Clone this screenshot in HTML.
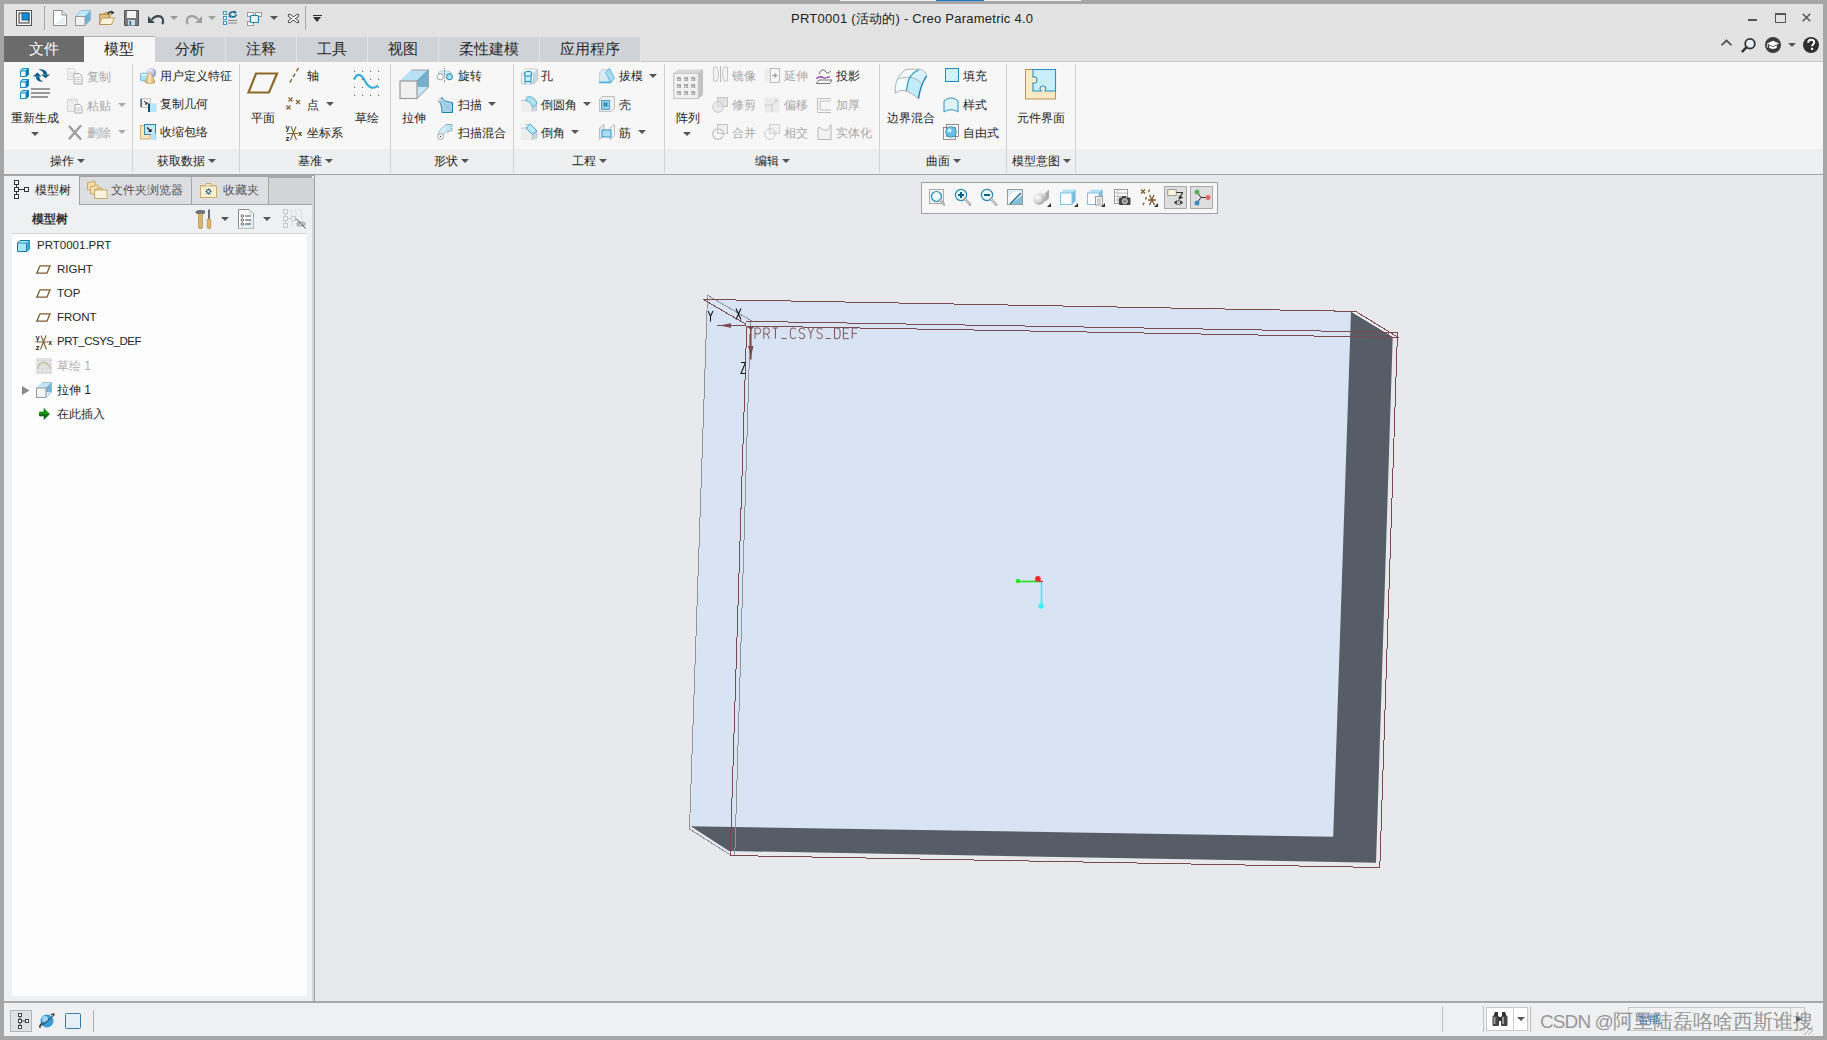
<!DOCTYPE html>
<html><head><meta charset="utf-8">
<style>
*{margin:0;padding:0;box-sizing:border-box}
html,body{width:1827px;height:1040px;overflow:hidden;background:#a6a6a6;font-family:"Liberation Sans",sans-serif;color:#333}
.a{position:absolute}
.t{position:absolute;white-space:nowrap;line-height:1}
svg{position:absolute;overflow:visible}
.arr{position:absolute;width:0;height:0;border-left:4px solid transparent;border-right:4px solid transparent}
</style></head><body>

<div class="a" style="left:840px;top:0px;width:241px;height:1px;background:#efefef;"></div>
<div class="a" style="left:936px;top:0px;width:48px;height:1px;background:#1f78d1;"></div>
<div class="a" style="left:4px;top:4px;width:1819px;height:32px;background:#e3e3e3;"></div>
<div class="t" style="left:791px;top:11.9px;font-size:13px;color:#222;font-weight:400;letter-spacing:0.24px">PRT0001 (活动的) - Creo Parametric 4.0</div>
<div class="a" style="left:1748px;top:19px;width:9px;height:2px;background:#555;"></div>
<svg style="left:1775px;top:13px" width="11" height="10" viewBox="0 0 11 10"><rect x="0.5" y="0.5" width="10" height="9" fill="none" stroke="#555"/><rect x="0" y="0" width="11" height="2" fill="#555"/></svg>
<svg style="left:1802px;top:13px" width="9" height="9" viewBox="0 0 9 9"><path d="M0.7 0.7L8.3 8.3M8.3 0.7L0.7 8.3" stroke="#555" stroke-width="1.5"/></svg>
<div class="a" style="left:4px;top:36px;width:1819px;height:26px;background:#e3e3e3;"></div>
<div class="a" style="left:4px;top:36px;width:80px;height:26px;background:#6b6b6b;"></div>
<div class="t" style="left:29px;top:40.5px;font-size:15px;color:#fff;font-weight:400;">文件</div>
<div class="a" style="left:84px;top:36px;width:71px;height:26px;background:#f7f7f7;border-top:1px solid #b0b0b0"></div>
<div class="t" style="left:104px;top:40.5px;font-size:15px;color:#222;font-weight:400;">模型</div>
<div class="a" style="left:155px;top:37px;width:70px;height:25px;background:#cfd2d6;"></div>
<div class="t" style="left:175px;top:40.5px;font-size:15px;color:#2a2a2a;font-weight:400;">分析</div>
<div class="a" style="left:226px;top:37px;width:70px;height:25px;background:#cfd2d6;"></div>
<div class="t" style="left:246px;top:40.5px;font-size:15px;color:#2a2a2a;font-weight:400;">注释</div>
<div class="a" style="left:297px;top:37px;width:70px;height:25px;background:#cfd2d6;"></div>
<div class="t" style="left:317px;top:40.5px;font-size:15px;color:#2a2a2a;font-weight:400;">工具</div>
<div class="a" style="left:368px;top:37px;width:70px;height:25px;background:#cfd2d6;"></div>
<div class="t" style="left:388px;top:40.5px;font-size:15px;color:#2a2a2a;font-weight:400;">视图</div>
<div class="a" style="left:439px;top:37px;width:100px;height:25px;background:#cfd2d6;"></div>
<div class="t" style="left:459px;top:40.5px;font-size:15px;color:#2a2a2a;font-weight:400;">柔性建模</div>
<div class="a" style="left:540px;top:37px;width:100px;height:25px;background:#cfd2d6;"></div>
<div class="t" style="left:560px;top:40.5px;font-size:15px;color:#2a2a2a;font-weight:400;">应用程序</div>
<div class="a" style="left:4px;top:62px;width:1819px;height:87px;background:#f7f7f7;"></div>
<div class="a" style="left:641px;top:61px;width:1182px;height:1px;background:#c5c8cc;"></div>
<div class="a" style="left:4px;top:149px;width:1819px;height:25px;background:#eeeff1;"></div>
<div class="a" style="left:4px;top:174px;width:1819px;height:1px;background:#b4b4b4;"></div>
<div class="a" style="left:132px;top:64px;width:1px;height:109px;background:#d2d2d2;"></div>
<div class="a" style="left:239px;top:64px;width:1px;height:109px;background:#d2d2d2;"></div>
<div class="a" style="left:390px;top:64px;width:1px;height:109px;background:#d2d2d2;"></div>
<div class="a" style="left:513px;top:64px;width:1px;height:109px;background:#d2d2d2;"></div>
<div class="a" style="left:664px;top:64px;width:1px;height:109px;background:#d2d2d2;"></div>
<div class="a" style="left:879px;top:64px;width:1px;height:109px;background:#d2d2d2;"></div>
<div class="a" style="left:1006px;top:64px;width:1px;height:109px;background:#d2d2d2;"></div>
<div class="a" style="left:1075px;top:64px;width:1px;height:109px;background:#d2d2d2;"></div>
<div class="t" style="left:50px;top:155.4px;font-size:12px;color:#262626;font-weight:400;">操作</div>
<div class="arr" style="left:76.5px;top:159.0px;border-left-width:4.0px;border-right-width:4.0px;border-top:4px solid #555"></div>
<div class="t" style="left:157px;top:155.4px;font-size:12px;color:#262626;font-weight:400;">获取数据</div>
<div class="arr" style="left:207.5px;top:159.0px;border-left-width:4.0px;border-right-width:4.0px;border-top:4px solid #555"></div>
<div class="t" style="left:298px;top:155.4px;font-size:12px;color:#262626;font-weight:400;">基准</div>
<div class="arr" style="left:324.5px;top:159.0px;border-left-width:4.0px;border-right-width:4.0px;border-top:4px solid #555"></div>
<div class="t" style="left:434px;top:155.4px;font-size:12px;color:#262626;font-weight:400;">形状</div>
<div class="arr" style="left:460.5px;top:159.0px;border-left-width:4.0px;border-right-width:4.0px;border-top:4px solid #555"></div>
<div class="t" style="left:572px;top:155.4px;font-size:12px;color:#262626;font-weight:400;">工程</div>
<div class="arr" style="left:598.5px;top:159.0px;border-left-width:4.0px;border-right-width:4.0px;border-top:4px solid #555"></div>
<div class="t" style="left:755px;top:155.4px;font-size:12px;color:#262626;font-weight:400;">编辑</div>
<div class="arr" style="left:781.5px;top:159.0px;border-left-width:4.0px;border-right-width:4.0px;border-top:4px solid #555"></div>
<div class="t" style="left:926px;top:155.4px;font-size:12px;color:#262626;font-weight:400;">曲面</div>
<div class="arr" style="left:952.5px;top:159.0px;border-left-width:4.0px;border-right-width:4.0px;border-top:4px solid #555"></div>
<div class="t" style="left:1012px;top:155.4px;font-size:12px;color:#262626;font-weight:400;">模型意图</div>
<div class="arr" style="left:1062.5px;top:159.0px;border-left-width:4.0px;border-right-width:4.0px;border-top:4px solid #555"></div>
<div class="t" style="left:11px;top:111.9px;font-size:12px;color:#262626;font-weight:400;">重新生成</div>
<div class="arr" style="left:30.5px;top:132.0px;border-left-width:4.0px;border-right-width:4.0px;border-top:4px solid #555"></div>
<div class="t" style="left:87px;top:70.9px;font-size:12px;color:#a9a9a9;font-weight:400;">复制</div>
<div class="t" style="left:87px;top:99.9px;font-size:12px;color:#a9a9a9;font-weight:400;">粘贴</div>
<div class="arr" style="left:117.5px;top:103.0px;border-left-width:4.0px;border-right-width:4.0px;border-top:4px solid #a9a9a9"></div>
<div class="t" style="left:87px;top:126.9px;font-size:12px;color:#a9a9a9;font-weight:400;">删除</div>
<div class="arr" style="left:117.5px;top:130.0px;border-left-width:4.0px;border-right-width:4.0px;border-top:4px solid #a9a9a9"></div>
<div class="t" style="left:160px;top:70.4px;font-size:12px;color:#262626;font-weight:400;">用户定义特征</div>
<div class="t" style="left:160px;top:98.4px;font-size:12px;color:#262626;font-weight:400;">复制几何</div>
<div class="t" style="left:160px;top:126.4px;font-size:12px;color:#262626;font-weight:400;">收缩包络</div>
<div class="t" style="left:251px;top:111.9px;font-size:12px;color:#262626;font-weight:400;">平面</div>
<div class="t" style="left:307px;top:70.4px;font-size:12px;color:#262626;font-weight:400;">轴</div>
<div class="t" style="left:307px;top:98.9px;font-size:12px;color:#262626;font-weight:400;">点</div>
<div class="arr" style="left:325.5px;top:102.0px;border-left-width:4.0px;border-right-width:4.0px;border-top:4px solid #555"></div>
<div class="t" style="left:307px;top:126.9px;font-size:12px;color:#262626;font-weight:400;">坐标系</div>
<div class="t" style="left:355px;top:111.9px;font-size:12px;color:#262626;font-weight:400;">草绘</div>
<div class="t" style="left:402px;top:111.9px;font-size:12px;color:#262626;font-weight:400;">拉伸</div>
<div class="t" style="left:458px;top:70.4px;font-size:12px;color:#262626;font-weight:400;">旋转</div>
<div class="t" style="left:458px;top:98.9px;font-size:12px;color:#262626;font-weight:400;">扫描</div>
<div class="arr" style="left:488.0px;top:102.0px;border-left-width:4.0px;border-right-width:4.0px;border-top:4px solid #555"></div>
<div class="t" style="left:458px;top:126.9px;font-size:12px;color:#262626;font-weight:400;">扫描混合</div>
<div class="t" style="left:541px;top:70.4px;font-size:12px;color:#262626;font-weight:400;">孔</div>
<div class="t" style="left:541px;top:98.9px;font-size:12px;color:#262626;font-weight:400;">倒圆角</div>
<div class="arr" style="left:583.0px;top:102.0px;border-left-width:4.0px;border-right-width:4.0px;border-top:4px solid #555"></div>
<div class="t" style="left:541px;top:126.9px;font-size:12px;color:#262626;font-weight:400;">倒角</div>
<div class="arr" style="left:571.0px;top:130.0px;border-left-width:4.0px;border-right-width:4.0px;border-top:4px solid #555"></div>
<div class="t" style="left:619px;top:70.4px;font-size:12px;color:#262626;font-weight:400;">拔模</div>
<div class="arr" style="left:649.0px;top:74.0px;border-left-width:4.0px;border-right-width:4.0px;border-top:4px solid #555"></div>
<div class="t" style="left:619px;top:98.9px;font-size:12px;color:#262626;font-weight:400;">壳</div>
<div class="t" style="left:619px;top:126.9px;font-size:12px;color:#262626;font-weight:400;">筋</div>
<div class="arr" style="left:637.5px;top:130.0px;border-left-width:4.0px;border-right-width:4.0px;border-top:4px solid #555"></div>
<div class="t" style="left:676px;top:111.9px;font-size:12px;color:#262626;font-weight:400;">阵列</div>
<div class="arr" style="left:683.0px;top:132.0px;border-left-width:4.0px;border-right-width:4.0px;border-top:4px solid #555"></div>
<div class="t" style="left:732px;top:70.4px;font-size:12px;color:#a9a9a9;font-weight:400;">镜像</div>
<div class="t" style="left:732px;top:98.9px;font-size:12px;color:#a9a9a9;font-weight:400;">修剪</div>
<div class="t" style="left:732px;top:126.9px;font-size:12px;color:#a9a9a9;font-weight:400;">合并</div>
<div class="t" style="left:784px;top:70.4px;font-size:12px;color:#a9a9a9;font-weight:400;">延伸</div>
<div class="t" style="left:784px;top:98.9px;font-size:12px;color:#a9a9a9;font-weight:400;">偏移</div>
<div class="t" style="left:784px;top:126.9px;font-size:12px;color:#a9a9a9;font-weight:400;">相交</div>
<div class="t" style="left:836px;top:70.4px;font-size:12px;color:#262626;font-weight:400;">投影</div>
<div class="t" style="left:836px;top:98.9px;font-size:12px;color:#a9a9a9;font-weight:400;">加厚</div>
<div class="t" style="left:836px;top:126.9px;font-size:12px;color:#a9a9a9;font-weight:400;">实体化</div>
<div class="t" style="left:887px;top:111.9px;font-size:12px;color:#262626;font-weight:400;">边界混合</div>
<div class="t" style="left:963px;top:70.4px;font-size:12px;color:#262626;font-weight:400;">填充</div>
<div class="t" style="left:963px;top:98.9px;font-size:12px;color:#262626;font-weight:400;">样式</div>
<div class="t" style="left:963px;top:126.9px;font-size:12px;color:#262626;font-weight:400;">自由式</div>
<div class="t" style="left:1017px;top:111.9px;font-size:12px;color:#262626;font-weight:400;">元件界面</div>
<svg style="left:16px;top:10px" width="16" height="16" viewBox="0 0 16 16"><rect x="0.5" y="0.5" width="15" height="15" fill="#fff" stroke="#555"/><rect x="3" y="3" width="10" height="10" fill="#eee" stroke="#333" stroke-width="1"/><rect x="6" y="3" width="7" height="7" fill="#0a8fd8" stroke="#1a4f8a" stroke-width="0.8"/></svg>
<div class="a" style="left:44px;top:6px;width:1px;height:24px;background:#a8a8a8;"></div>
<svg style="left:53px;top:10px" width="14" height="16" viewBox="0 0 14 16"><path d="M0.5 0.5H9L13.5 5V15.5H0.5Z" fill="#fff" stroke="#8a8a8a"/><path d="M9 0.5V5H13.5" fill="#dfe8ee" stroke="#8a8a8a"/><path d="M2 14L12 6V14Z" fill="#e6eef3"/></svg>
<svg style="left:75px;top:10px" width="16" height="16" viewBox="0 0 16 16"><path d="M0.5 6.5L6 0.5H15.5V10L10 15.5Z" fill="#8cc7e3"/><path d="M0.5 6.5L6 0.5H15.5L10 6.5Z" fill="#c4e7f6"/><path d="M10 6.5L15.5 0.5V10L10 15.5Z" fill="#6fb1d3"/><rect x="0.5" y="6.5" width="9.5" height="9" fill="#f2f2f2" stroke="#999"/><path d="M0.5 6.5L6 0.5H15.5V10L10 15.5M10 6.5L15.5 0.5" fill="none" stroke="#8fbcd4" stroke-width="0.8"/></svg>
<svg style="left:99px;top:10px" width="16" height="15" viewBox="0 0 16 15"><path d="M0.5 4H5L6.5 2.5H11V7H0.5Z" fill="#d6b26c" stroke="#b08a45" stroke-width="0.8"/><path d="M0.5 14.5V4.5H10V14.5Z" fill="#e2c283" stroke="#b08a45" stroke-width="0.8"/><path d="M0.5 14.5L3 8H15.5L12.5 14.5Z" fill="#fdf3dc" stroke="#b08a45" stroke-width="0.8"/><path d="M9 4C10 1.5 12 1 14 2.5" fill="none" stroke="#333" stroke-width="1.4"/><path d="M12.5 0.5L15.5 3L12 4.5Z" fill="#333"/></svg>
<svg style="left:124px;top:10px" width="15" height="16" viewBox="0 0 15 16"><path d="M0.5 0.5H14.5V15.5H0.5Z" fill="#7a7a7a" stroke="#555"/><rect x="3" y="1" width="9" height="7" fill="#f4f4f4"/><rect x="4" y="10" width="7" height="5.5" fill="#bfe0f0"/><rect x="5.5" y="11" width="1.5" height="4" fill="#555"/></svg>
<svg style="left:148px;top:14px" width="16" height="10" viewBox="0 0 16 10"><path d="M4 5.5C7 1 14 1 15 6C15.5 8 14.5 9.5 14 10" fill="none" stroke="#3c4a52" stroke-width="2.2"/><path d="M0 2V9H7Z" fill="#3c4a52"/></svg>
<div class="arr" style="left:169.5px;top:16.0px;border-left-width:4.0px;border-right-width:4.0px;border-top:4px solid #9a9a9a"></div>
<svg style="left:186px;top:14px" width="16" height="10" viewBox="0 0 16 10"><path d="M12 5.5C9 1 2 1 1 6C0.5 8 1.5 9.5 2 10" fill="none" stroke="#a0a0a0" stroke-width="2.2"/><path d="M16 2V9H9Z" fill="#a0a0a0"/></svg>
<div class="arr" style="left:207.5px;top:16.0px;border-left-width:4.0px;border-right-width:4.0px;border-top:4px solid #a0a0a0"></div>
<svg style="left:223px;top:10px" width="15" height="15" viewBox="0 0 15 15"><rect x="0.5" y="1.5" width="3" height="3" fill="#fff" stroke="#2a90c8" stroke-width="0.9"/><rect x="0.5" y="6.5" width="3" height="3" fill="#fff" stroke="#2a90c8" stroke-width="0.9"/><rect x="0.5" y="11.5" width="3" height="3" fill="#fff" stroke="#2a90c8" stroke-width="0.9"/><path d="M5 13H14M5 10.5H14" stroke="#888" stroke-width="1.2"/><path d="M6 5C7 2 10 1 12 2.5M13.5 4.5C12.5 7 10 7.5 8.5 6.5" fill="none" stroke="#0f6c93" stroke-width="1.6"/><path d="M11 0.5L14 2.5L11 4Z M8 8L5 6L8.5 4.5Z" fill="#0f6c93"/></svg>
<svg style="left:247px;top:12px" width="15" height="14" viewBox="0 0 15 14"><rect x="0.5" y="0.5" width="6" height="4" fill="#fff" stroke="#999"/><rect x="8.5" y="0.5" width="6" height="4" fill="#fff" stroke="#999"/><rect x="0.5" y="9.5" width="6" height="4" fill="#fff" stroke="#999"/><rect x="3.5" y="3.5" width="8" height="7" rx="1" fill="#e8f3f8" stroke="#2a7fa8" stroke-width="1.2"/></svg>
<div class="arr" style="left:269.5px;top:16.0px;border-left-width:4.0px;border-right-width:4.0px;border-top:4px solid #555"></div>
<svg style="left:288px;top:14px" width="11" height="9" viewBox="0 0 11 9"><path d="M1.5 1.5L9.5 7.5M9.5 1.5L1.5 7.5" stroke="#333" stroke-width="3.4" stroke-linecap="round"/><path d="M1.5 1.5L9.5 7.5M9.5 1.5L1.5 7.5" stroke="#fff" stroke-width="1.6" stroke-linecap="round"/></svg>
<div class="a" style="left:305px;top:6px;width:1px;height:24px;background:#a8a8a8;"></div>
<div class="a" style="left:313px;top:15px;width:9px;height:1px;background:#333;"></div>
<div class="arr" style="left:313.0px;top:17.0px;border-left-width:4.5px;border-right-width:4.5px;border-top:5px solid #333"></div>
<svg style="left:1721px;top:39px" width="11" height="6" viewBox="0 0 11 6"><path d="M0 6L5.5 0.5L11 6L9.5 6L5.5 2.5L1.5 6Z" fill="#555" stroke="#555" stroke-width="0.8"/></svg>
<svg style="left:1741px;top:37px" width="16" height="16" viewBox="0 0 16 16"><circle cx="9" cy="6.7" r="4.8" fill="#e8eff4" stroke="#333" stroke-width="1.8"/><path d="M5.6 10.2L1.5 14.4" stroke="#333" stroke-width="2.4" stroke-linecap="round"/></svg>
<svg style="left:1765px;top:37px" width="16" height="16" viewBox="0 0 16 16"><circle cx="8" cy="8" r="8" fill="#3b3b3b"/><path d="M1.8 6.5L8 3.8L14.2 6.5L8 9.2Z" fill="#fff"/><path d="M4.2 8.2V10.8C6 12.3 10 12.3 11.8 10.8V8.2L8 9.9Z" fill="#fff"/><path d="M2.4 6.8V10.5" stroke="#fff" stroke-width="0.8"/></svg>
<div class="arr" style="left:1787.5px;top:43.0px;border-left-width:4.0px;border-right-width:4.0px;border-top:4px solid #555"></div>
<svg style="left:1803px;top:37px" width="16" height="16" viewBox="0 0 16 16"><circle cx="8" cy="8" r="8" fill="#2f2f2f"/><path d="M5.2 5.8C5.2 3.8 6.6 2.8 8.2 2.8C10 2.8 11.2 3.9 11.2 5.4C11.2 7.2 9 7.5 9 9.3" fill="none" stroke="#fff" stroke-width="2"/><rect x="7.9" y="10.8" width="2.2" height="2.2" fill="#fff"/></svg>
<svg style="left:19px;top:67px" width="32" height="32" viewBox="0 0 32 32"><path d="M1 3.5L3.5 1H10V7.5L7.5 10H1Z" fill="#1d8fc5"/><rect x="2" y="4.5" width="4.5" height="4.5" fill="#eefafe"/><path d="M2 3.5L3.8 2H8.5L6.5 3.5Z" fill="#9fe0f5"/><path d="M7.5 3.5L9 2V7.5L7.5 9Z" fill="#156b99"/><path d="M1 14.5L3.5 12H10V18.5L7.5 21H1Z" fill="#1d8fc5"/><rect x="2" y="15.5" width="4.5" height="4.5" fill="#eefafe"/><path d="M2 14.5L3.8 13H8.5L6.5 14.5Z" fill="#9fe0f5"/><path d="M7.5 14.5L9 13V18.5L7.5 20Z" fill="#156b99"/><path d="M1 25.5L3.5 23H10V29.5L7.5 32H1Z" fill="#1d8fc5"/><rect x="2" y="26.5" width="4.5" height="4.5" fill="#eefafe"/><path d="M2 25.5L3.8 24H8.5L6.5 25.5Z" fill="#9fe0f5"/><path d="M7.5 25.5L9 24V29.5L7.5 31Z" fill="#156b99"/><path d="M12 22H31M12 26H31M12 30H29" stroke="#9a9a9a" stroke-width="2"/><path d="M20 2.3C24.5 1.6 28 3.8 28.3 7.6H24.6C24.4 5.2 23 3.3 20 2.7Z" fill="#0f5f88"/><path d="M22.2 7.5H31L26.5 11.2Z" fill="#0f5f88"/><path d="M16.8 9.4H20.3C20.3 12 21.8 13.6 25 14.4C21 15.2 17 13.8 16.8 9.4Z" fill="#0f5f88"/><path d="M13.9 9.6H22.6L18.4 5.5Z" fill="#0f5f88"/></svg>
<svg style="left:247px;top:72px" width="32" height="22" viewBox="0 0 32 22"><path d="M9 1.5H30L22 20.5H1.5Z" fill="none" stroke="#8b6a2a" stroke-width="2.2"/></svg>
<svg style="left:353px;top:70px" width="27" height="27" viewBox="0 0 27 27"><g fill="#555"><rect x="1" y="1" width="1" height="1"/><rect x="1" y="9" width="1" height="1"/><rect x="1" y="17" width="1" height="1"/><rect x="1" y="25" width="1" height="1"/><rect x="9" y="1" width="1" height="1"/><rect x="9" y="9" width="1" height="1"/><rect x="9" y="17" width="1" height="1"/><rect x="9" y="25" width="1" height="1"/><rect x="17" y="1" width="1" height="1"/><rect x="17" y="9" width="1" height="1"/><rect x="17" y="17" width="1" height="1"/><rect x="17" y="25" width="1" height="1"/><rect x="25" y="1" width="1" height="1"/><rect x="25" y="9" width="1" height="1"/><rect x="25" y="17" width="1" height="1"/><rect x="25" y="25" width="1" height="1"/></g><path d="M1 9.5C4 3 8 3 12 11C16 19 21 19 25 15.5" fill="none" stroke="#3aaed8" stroke-width="2.2"/></svg>
<svg style="left:399px;top:69px" width="30" height="30" viewBox="0 0 30 30"><path d="M1 12L12.5 1H29.5V18L18 29.5Z" fill="#9fd0e8"/><path d="M1 12L12.5 1H29.5L18 12Z" fill="#b9e1f3"/><path d="M18 12L29.5 1V18L18 29.5Z" fill="#74afcc"/><path d="M18 18L29.5 18L18 29.5Z" fill="#c6e8f6"/><rect x="1" y="12" width="17" height="17.5" fill="#f0f0f0" stroke="#9c9c9c" stroke-width="1.2"/><path d="M12.5 1H29.5V18L18 29.5" fill="none" stroke="#a0a0a0" stroke-width="1"/><path d="M18 12L29.5 1" stroke="#5e9ab8" stroke-width="1"/></svg>
<svg style="left:673px;top:69px" width="30" height="30" viewBox="0 0 30 30"><path d="M0.5 4.5L4.5 0.5H30V25.5L25.5 29.7H0.5Z" fill="#d9d9d9"/><path d="M25.3 4.1L30 0V25.5L25.3 29.7Z" fill="#c2c2c2"/><rect x="0.8" y="4.3" width="24.5" height="25.2" fill="#f1f1f1" stroke="#c9c9c9" stroke-width="1.2"/><rect x="4.0" y="8.0" width="4" height="4" fill="#a9a9a9"/><rect x="5.0" y="10.0" width="1.3" height="1.3" fill="#eee"/><rect x="4.0" y="15.0" width="4" height="4" fill="#a9a9a9"/><rect x="5.0" y="17.0" width="1.3" height="1.3" fill="#eee"/><rect x="4.0" y="22.0" width="4" height="4" fill="#a9a9a9"/><rect x="5.0" y="24.0" width="1.3" height="1.3" fill="#eee"/><rect x="11.1" y="8.0" width="4" height="4" fill="#a9a9a9"/><rect x="12.1" y="10.0" width="1.3" height="1.3" fill="#eee"/><rect x="11.1" y="15.0" width="4" height="4" fill="#a9a9a9"/><rect x="12.1" y="17.0" width="1.3" height="1.3" fill="#eee"/><rect x="11.1" y="22.0" width="4" height="4" fill="#a9a9a9"/><rect x="12.1" y="24.0" width="1.3" height="1.3" fill="#eee"/><rect x="18.2" y="8.0" width="4" height="4" fill="#a9a9a9"/><rect x="19.2" y="10.0" width="1.3" height="1.3" fill="#eee"/><rect x="18.2" y="15.0" width="4" height="4" fill="#a9a9a9"/><rect x="19.2" y="17.0" width="1.3" height="1.3" fill="#eee"/><rect x="18.2" y="22.0" width="4" height="4" fill="#a9a9a9"/><rect x="19.2" y="24.0" width="1.3" height="1.3" fill="#eee"/></svg>
<svg style="left:894px;top:68px" width="32" height="30" viewBox="0 0 32 30"><path d="M1.2 25.4C1 18 2 12 6 7C9 3.5 11 1.2 13.7 1.2H25.2C29 1.4 31.5 4 32.7 7.9C29.5 13 26 20 24.5 30.6C18 26 12 21 8.7 22C5 22.5 3 24 1.2 25.4Z" fill="#f2fbfe"/><path d="M16.4 9.1C19 9.5 25 11 27.2 15.6C26 20 25 25 24.5 30.6C20 27 16 24 12.5 23C13 17 14 12 16.4 9.1Z" fill="#c3ecfa"/><path d="M24.8 1.8C28 3 31 5 32.7 7.9C30 12 28 15 27.2 15.6C25 11 20 9.5 16.4 9.1C19 5 22 3 24.8 1.8Z" fill="#d5f2fb"/><path d="M1.2 25.4C1 18 2 12 6 7C9 3.5 11 1.2 13.7 1.2H25.2C29 1.4 31.5 4 32.7 7.9" fill="none" stroke="#a8a8a8" stroke-width="0.9"/><path d="M1.2 25.4C4 23 7 22 10 22.5C15 23.5 20 27 24.5 30.6" fill="none" stroke="#a8a8a8" stroke-width="0.9"/><path d="M4.5 11C8 9.5 12 9 16 9.3C21 10 25 12 27.2 15.6" fill="none" stroke="#a8a8a8" stroke-width="0.9"/><path d="M24.8 1.8C20 4 17 7 15 11C13.5 15 13 19 12.5 23" fill="none" stroke="#2f95c6" stroke-width="1.2"/><path d="M32.7 7.9C29 13 26 20 24.5 30.6" fill="none" stroke="#1f7fae" stroke-width="1.4"/></svg>
<svg style="left:1025px;top:69px" width="31" height="31" viewBox="0 0 31 31"><rect x="0.5" y="0.5" width="30" height="29.5" fill="#fbe8c4" stroke="#b89250" stroke-width="1"/><path d="M8 0.5H30.5V22H20C21.5 20 21 17 18 17C15 17 14 20 16 22H8V14C10 15 12 13 12 11C12 9 10 7 8 8Z" fill="#c9eefb" stroke="#2a8fc4" stroke-width="1.1"/></svg>
<svg style="left:67px;top:68px" width="16" height="16" viewBox="0 0 16 16"><path d="M0.5 0.5H6.5L8.5 2.5V11.5H0.5Z" fill="#f2f2f2" stroke="#cfcfcf" stroke-width="0.8"/><path d="M2 4.5H6.5M2 6.5H6.5M2 8.5H6.5" stroke="#d4d4d4" stroke-width="0.6"/><path d="M7 5.5H12.5L15 8V16H7Z" fill="#f7f7f7" stroke="#a4a4a4" stroke-width="0.9"/><path d="M8.5 9.5H13.5M8.5 11.5H13.5M8.5 13.5H13.5" stroke="#b8b8b8" stroke-width="0.7"/></svg>
<svg style="left:67px;top:97px" width="16" height="16" viewBox="0 0 16 16"><path d="M0.5 2.5H10.5V14.5H0.5Z" fill="#eeeeee" stroke="#cccccc" stroke-width="0.8"/><path d="M3.5 2L5.5 0L7.5 2V3.2H3.5Z" fill="#f7f7f7" stroke="#c8c8c8" stroke-width="0.7"/><path d="M8 7.5H12.5L15 10V16H8Z" fill="#f7f7f7" stroke="#a8a8a8" stroke-width="0.9"/><path d="M9.5 11.5H13.5M9.5 13.5H13.5" stroke="#b8b8b8" stroke-width="0.7"/></svg>
<svg style="left:68px;top:125px" width="14" height="15" viewBox="0 0 14 15"><path d="M1.5 1.5L12.5 14M12.5 1L1.5 13.5" stroke="#9c9c9c" stroke-width="2.3" stroke-linecap="round"/></svg>
<svg style="left:140px;top:68px" width="17" height="17" viewBox="0 0 17 17"><defs><radialGradient id="udfs" cx="0.35" cy="0.3" r="0.8"><stop offset="0" stop-color="#f4f5fd"/><stop offset="0.55" stop-color="#b9c0ea"/><stop offset="1" stop-color="#6f7cc4"/></radialGradient><linearGradient id="udfc" x1="0" y1="0" x2="1" y2="0"><stop offset="0" stop-color="#c9a65e"/><stop offset="0.45" stop-color="#f6e6c0"/><stop offset="1" stop-color="#c7a45c"/></linearGradient></defs><rect x="0.5" y="5.3" width="8.5" height="7.5" rx="0.8" fill="#a8e6f8" stroke="#6fb6d3" stroke-width="0.9"/><rect x="1.3" y="6" width="7" height="1.6" fill="#eafaff"/><circle cx="11.2" cy="4.8" r="4.9" fill="url(#udfs)"/><path d="M9.9 3.6C11 5 14 11 15 14C15 16 5 16 5 14C6 11 9 5 9.9 3.6Z" fill="url(#udfc)" stroke="#b89550" stroke-width="0.6"/></svg>
<svg style="left:140px;top:96px" width="17" height="16" viewBox="0 0 17 16"><rect x="0.5" y="2.5" width="10" height="9" fill="#ececec" stroke="#aaa" stroke-width="0.6"/><rect x="0.5" y="3" width="1.5" height="8" fill="#4f6f86"/><path d="M4 5L7 8M7 6V8H5" stroke="#222" stroke-width="1" fill="none"/><rect x="8.5" y="7.5" width="8" height="8.5" fill="#b6e3f5"/><rect x="8" y="7.5" width="2" height="8.5" fill="#0e4f70"/></svg>
<svg style="left:140px;top:124px" width="17" height="16" viewBox="0 0 17 16"><rect x="0.5" y="1.5" width="9.5" height="13.5" fill="#fbe6c0" stroke="#c7a25e" stroke-width="0.8"/><rect x="4.5" y="0.5" width="11" height="10" fill="#c3e8f6" stroke="#2f87b2" stroke-width="1"/><path d="M7 3.5L11 7.5M11 5V7.5H8.5" stroke="#222" stroke-width="1.2" fill="none"/><rect x="11" y="10" width="5.5" height="6" fill="#b6e3f5"/></svg>
<svg style="left:288px;top:67px" width="12" height="18" viewBox="0 0 12 18"><path d="M10.5 1L1 17" stroke="#806230" stroke-width="1.4" stroke-dasharray="4 2.5"/></svg>
<svg style="left:286px;top:97px" width="16" height="14" viewBox="0 0 16 14"><g stroke="#806230" stroke-width="1.1"><path d="M2.5 0.5L6.5 4.5M6.5 0.5L2.5 4.5"/><path d="M10 3L14 7M14 3L10 7"/><path d="M0.5 8.5L4.5 12.5M4.5 8.5L0.5 12.5"/></g></svg>
<svg style="left:286px;top:124px" width="17" height="16" viewBox="0 0 17 16"><path d="M1 9.5H12M5 2.5L10.5 16M10 2.5L4.5 16" stroke="#806230" stroke-width="1.1" fill="none"/><text x="-0.5" y="5.5" font-size="7" font-weight="700" fill="#222" font-family="Liberation Mono">y</text><text x="-0.5" y="16.5" font-size="7" font-weight="700" fill="#222" font-family="Liberation Mono">z</text><text x="12" y="12" font-size="7" font-weight="700" fill="#222" font-family="Liberation Mono">x</text></svg>
<svg style="left:437px;top:68px" width="16" height="15" viewBox="0 0 16 15"><path d="M1 5C3 2 13 2 15 5C13 7 3 7 1 5Z" fill="#cde9f5" stroke="#8cc" stroke-width="0.6"/><circle cx="3.3" cy="8.8" r="3" fill="#fff" stroke="#999" stroke-width="0.9"/><circle cx="12.5" cy="8.8" r="3" fill="#9fe0f7" stroke="#1d7fb0" stroke-width="1"/><path d="M7.5 0V15" stroke="#333" stroke-width="0.6" stroke-dasharray="1.2 1.2"/></svg>
<svg style="left:437px;top:97px" width="16" height="16" viewBox="0 0 16 16"><path d="M2 4L5 0.5C7 4 10 5 15.5 5.5V15.5H5C5 10 4 7 2 4Z" fill="#a7d6ea" stroke="#1e7fae" stroke-width="1"/><path d="M5 4L15 15M15.5 5.5L5 15" stroke="#7fb9d4" stroke-width="0.8"/><path d="M0.5 4.5L4 1V4.5Z" fill="#f5f5f5" stroke="#aaa" stroke-width="0.6"/></svg>
<svg style="left:437px;top:124px" width="16" height="16" viewBox="0 0 16 16"><path d="M1 11C2 5 7 1 14.5 0.5V6C10 6.5 6 9 4.5 14Z" fill="#d7eef7" stroke="#7ab8d4" stroke-width="0.8"/><path d="M8.5 0.5H15V6L10 8.5" fill="#bfe2f1" stroke="#333" stroke-width="0.6" stroke-dasharray="1 1"/><circle cx="3.5" cy="12.5" r="3" fill="#f0f0f0" stroke="#999" stroke-width="0.8"/><circle cx="3.5" cy="12.5" r="0.6" fill="#222"/></svg>
<svg style="left:521px;top:68px" width="17" height="17" viewBox="0 0 17 17"><path d="M0.5 5L4.5 1H16.5V12L12.5 16H0.5Z" fill="#f1f1f1"/><path d="M0.5 5L4.5 1H16.5L12.5 5Z" fill="#fbfbfb"/><path d="M12.5 5L16.5 1V12L12.5 16Z" fill="#c6d8e2"/><path d="M0.5 16V5L4.5 1H16.5V12L12.5 16H0.5M12.5 5V16" fill="none" stroke="#c4c4c4" stroke-width="0.9"/><path d="M4 15.5V7.5C2.5 6.5 3 4 6 3.5H9C11 4 11.5 6 10 7.5V15.5" fill="#c9f0fd" stroke="#1b8ec6" stroke-width="1.1"/><path d="M4 7.5C5 8.5 9 8.5 10 7.5M4.5 13.5H9.5" fill="none" stroke="#1b8ec6" stroke-width="1"/></svg>
<svg style="left:521px;top:96px" width="17" height="17" viewBox="0 0 17 17"><rect x="0" y="4.4" width="11.3" height="11.3" fill="#ededed"/><path d="M11.3 11.5L15.5 8V15L11.3 15.7Z" fill="#c6d8e2"/><path d="M4 4.4L7 0.8H9.5C13 1.5 15.5 4.5 16 8L11.3 11.5C11 8 8 5 4 4.4Z" fill="#aee3f6" stroke="#38a2d2" stroke-width="0.8"/><path d="M0 4.4H4M4.5 0.8H7M11.3 11.5V15.7M15.5 8V14" stroke="#bcbcbc" stroke-width="0.8"/></svg>
<svg style="left:521px;top:124px" width="17" height="17" viewBox="0 0 17 17"><rect x="0" y="4" width="11.3" height="12" fill="#ededed"/><path d="M11.3 10.5L16 7V15L11.3 16Z" fill="#c6d8e2"/><path d="M5 4L9.3 0L16 7L11.4 10.5Z" fill="#bdeafb" stroke="#2a93c6" stroke-width="0.9"/><path d="M0 4H5M4.5 0.5H8M11.3 10.5V16M16 7V14" stroke="#bcbcbc" stroke-width="0.8"/></svg>
<svg style="left:599px;top:68px" width="16" height="15" viewBox="0 0 16 15"><path d="M0.5 4.5L3.5 1.5H10V14.5H0.5Z" fill="#d6ebf4" stroke="#bbb" stroke-width="0.6"/><path d="M6.5 4.5L10.5 0.5L15.5 10L12 14.5Z" fill="#a8dcf1" stroke="#4ba8d2" stroke-width="0.8"/><rect x="0" y="13.5" width="12" height="1.8" fill="#4fb3dd"/></svg>
<svg style="left:599px;top:96px" width="16" height="16" viewBox="0 0 16 16"><path d="M0.5 3.5L3 0.5H15.5V12.5L12.5 15.5H0.5Z" fill="#eeeeee" stroke="#aaa" stroke-width="0.7"/><rect x="2.5" y="4.5" width="8" height="9" fill="#8fd0ea" stroke="#3c8fb5" stroke-width="0.8"/><rect x="4.5" y="6.5" width="4" height="4" fill="#3e8db5"/></svg>
<svg style="left:599px;top:124px" width="16" height="16" viewBox="0 0 16 16"><path d="M0.5 4L5 0.5V12L0.5 15.5Z" fill="#dde9ee" stroke="#999" stroke-width="0.6"/><path d="M11 4L15.5 0.5V12L11 15.5Z" fill="#eef3f5" stroke="#999" stroke-width="0.6"/><rect x="3" y="6" width="9" height="7" fill="#a8def3" stroke="#2a90c4" stroke-width="0.9"/></svg>
<svg style="left:713px;top:66px" width="15" height="16" viewBox="0 0 15 16"><path d="M0.5 1H4C6 4 6 12 4 15H0.5Z" fill="#f2f2f2" stroke="#bdbdbd" stroke-width="0.8"/><path d="M14.5 1H11C9 4 9 12 11 15H14.5Z" fill="#f2f2f2" stroke="#bdbdbd" stroke-width="0.8"/><path d="M7.5 0V16" stroke="#bdbdbd"/></svg>
<svg style="left:712px;top:97px" width="16" height="16" viewBox="0 0 16 16"><rect x="5.5" y="0.5" width="10" height="9" fill="#e2e2e2" stroke="#c4c4c4"/><circle cx="6" cy="10" r="5.3" fill="rgba(230,230,230,0.7)" stroke="#c8c8c8"/></svg>
<svg style="left:712px;top:124px" width="16" height="16" viewBox="0 0 16 16"><rect x="5.5" y="0.5" width="10" height="9" fill="#efefef" stroke="#c4c4c4"/><circle cx="6" cy="10" r="5.3" fill="none" stroke="#bdbdbd" stroke-width="1.1"/></svg>
<svg style="left:764px;top:68px" width="16" height="16" viewBox="0 0 16 16"><rect x="0.5" y="0.5" width="15" height="14" fill="#ececec"/><rect x="6.5" y="0.5" width="9" height="14" fill="#f6f6f6" stroke="#bcbcbc"/><path d="M8 7.5H12M10.5 5.5L12.5 7.5L10.5 9.5" stroke="#999" stroke-width="1.2" fill="none"/></svg>
<svg style="left:764px;top:97px" width="16" height="16" viewBox="0 0 16 16"><path d="M0.5 0.5H13C15 0.5 15.5 2 15.5 4V15.5H0.5Z" fill="#ebebeb"/><path d="M1 8H8V15M8 8L13 3M11 3H13V5" stroke="#b5b5b5" stroke-width="0.9" fill="none" stroke-dasharray="1.5 1"/></svg>
<svg style="left:764px;top:124px" width="16" height="16" viewBox="0 0 16 16"><rect x="5.5" y="0.5" width="10" height="9" fill="#f0f0f0" stroke="#d0d0d0"/><circle cx="6" cy="10" r="5.3" fill="none" stroke="#c8c8c8" stroke-width="1"/></svg>
<svg style="left:816px;top:69px" width="17" height="15" viewBox="0 0 17 15"><path d="M3 5C5 0 8 0 10 3C12 6 14 2 15 2" fill="none" stroke="#555" stroke-width="1"/><path d="M0.5 10C3 6 6 8 8 9C10 10 12 7 14 8" fill="none" stroke="#8a3db7" stroke-width="1.3"/><path d="M0.5 14L3 11H16L14 14.5H0.5Z" fill="none" stroke="#666" stroke-width="0.9"/></svg>
<svg style="left:817px;top:98px" width="15" height="16" viewBox="0 0 15 16"><path d="M0.5 0.5H14M0.5 0.5V14.5H14M3 3H14M3 3V12H14" stroke="#c0c0c0" stroke-width="1" fill="none"/></svg>
<svg style="left:816px;top:124px" width="16" height="16" viewBox="0 0 16 16"><path d="M2 15.5V4C5 2 8 8 11 6C13 5 14 2 15 0.5V15.5Z" fill="#f2f2f2" stroke="#b8b8b8" stroke-width="1"/></svg>
<svg style="left:945px;top:68px" width="14" height="14" viewBox="0 0 14 14"><rect x="0.5" y="0.5" width="13" height="13" fill="#c9eefb" stroke="#1f8cc3" stroke-width="1"/><path d="M1 7L7 1M1 12L12 1M5 13L13 5" stroke="#fff" stroke-width="1"/></svg>
<svg style="left:943px;top:97px" width="16" height="16" viewBox="0 0 16 16"><path d="M1 15V4C5 0 11 0 15 4V15C11 12 5 12 1 15Z" fill="#ddf2fa" stroke="#2a92c6" stroke-width="1"/></svg>
<svg style="left:943px;top:124px" width="16" height="16" viewBox="0 0 16 16"><rect x="3.5" y="0.5" width="12" height="12" fill="none" stroke="#777" stroke-width="0.8"/><rect x="0.5" y="3.5" width="12" height="12" fill="none" stroke="#777" stroke-width="0.8"/><circle cx="8" cy="8" r="5.3" fill="#64c2e6" stroke="#2f86b3" stroke-width="0.7"/><circle cx="6.5" cy="6.5" r="2" fill="#d6f2fb"/></svg>
<div class="a" style="left:4px;top:175px;width:310px;height:826px;background:#eef0f2;"></div>
<div class="a" style="left:4px;top:174px;width:1819px;height:2px;background:#a6a6a6;"></div>
<div class="a" style="left:312px;top:178px;width:2px;height:823px;background:#d3d4d6;"></div>
<div class="a" style="left:314px;top:175px;width:1px;height:826px;background:#a0a0a0;"></div>
<div class="a" style="left:268px;top:176px;width:44px;height:29px;background:#d3d4d6;border-top:2px solid #a6a6a6"></div>
<div class="a" style="left:79px;top:176px;width:113px;height:29px;background:#dcdee1;border:1px solid #a4a4a4"></div>
<div class="a" style="left:191px;top:176px;width:78px;height:29px;background:#dcdee1;border:1px solid #a4a4a4"></div>
<div class="a" style="left:269px;top:204px;width:43px;height:1px;background:#a4a4a4;"></div>
<svg style="left:14px;top:180px" width="15" height="19" viewBox="0 0 15 19"><g fill="#fff" stroke="#333" stroke-width="1"><rect x="0.5" y="0.5" width="4" height="4"/><rect x="0.5" y="7.5" width="4" height="4"/><rect x="0.5" y="14.5" width="4" height="4"/><rect x="10.5" y="7.5" width="4" height="4"/></g><path d="M2.5 4.5V7.5M2.5 11.5V14.5M4.5 9.5H10.5" stroke="#333" stroke-width="1"/></svg>
<div class="t" style="left:35px;top:183.9px;font-size:12px;color:#262626;font-weight:400;">模型树</div>
<svg style="left:87px;top:180px" width="21" height="19" viewBox="0 0 21 19"><g stroke="#c49c55" stroke-width="0.8"><path d="M0.5 2.5H4L5 1H8V10H0.5Z" fill="#f3dca8"/><path d="M3.5 6.5H7L8 5H11V14H3.5Z" fill="#f5e0b0"/><path d="M7.5 9.5H11L12 8H15V18H7.5Z" fill="#f4dca5"/><rect x="7.5" y="10" width="12.5" height="8.5" fill="#fdf3dd"/></g></svg>
<div class="t" style="left:111px;top:183.9px;font-size:12px;color:#555;font-weight:400;">文件夹浏览器</div>
<svg style="left:200px;top:183px" width="17" height="15" viewBox="0 0 17 15"><path d="M0.5 2.5H5L6 0.5H11V3H16.5V14.5H0.5Z" fill="#fbe9c0" stroke="#c9a45c" stroke-width="0.8"/><rect x="0.5" y="3" width="16" height="11.5" fill="#fdf1d6" stroke="#c9a45c" stroke-width="0.8"/><g stroke="#0e4f6e" stroke-width="1.2"><path d="M8.5 5.5V11.5M5.5 8.5H11.5M6.4 6.4L10.6 10.6M10.6 6.4L6.4 10.6"/></g><circle cx="8.5" cy="8.5" r="1.2" fill="#fff"/></svg>
<div class="t" style="left:223px;top:183.9px;font-size:12px;color:#555;font-weight:400;">收藏夹</div>
<div class="t" style="left:32px;top:212.9px;font-size:12px;color:#333;font-weight:700;">模型树</div>
<svg style="left:195px;top:209px" width="17" height="20" viewBox="0 0 17 20"><path d="M0 3C2 0.5 6 0.5 10 1.5V4.5L8 5H2Z" fill="#6a6f78"/><rect x="3.5" y="4.5" width="4" height="15" rx="1.5" fill="#d9b66b" stroke="#a8833e" stroke-width="0.6"/><rect x="13" y="0.5" width="2" height="10" fill="#6a6f78"/><rect x="12.2" y="10" width="3.6" height="9.5" rx="1.2" fill="#d9b66b" stroke="#a8833e" stroke-width="0.6"/></svg>
<div class="arr" style="left:220.5px;top:217.0px;border-left-width:4.0px;border-right-width:4.0px;border-top:4px solid #555"></div>
<svg style="left:238px;top:209px" width="16" height="20" viewBox="0 0 16 20"><path d="M0.5 0.5H11L15.5 5V19.5H0.5Z" fill="#fff" stroke="#8a8a8a"/><path d="M11 0.5V5H15.5Z" fill="#cfe2ec"/><path d="M0.5 19.5L15.5 8V19.5Z" fill="#e3eef3"/><g fill="none" stroke="#444" stroke-width="0.8"><circle cx="4.3" cy="7" r="1.3"/><circle cx="4.3" cy="11" r="1.3"/><circle cx="4.3" cy="15" r="1.3"/></g><path d="M7 7H13M7 11H13M7 15H13" stroke="#444" stroke-width="1"/></svg>
<div class="arr" style="left:262.5px;top:217.0px;border-left-width:4.0px;border-right-width:4.0px;border-top:4px solid #555"></div>
<svg style="left:283px;top:209px" width="23" height="20" viewBox="0 0 23 20"><g fill="none" stroke="#c8c8c8" stroke-width="1"><rect x="0.5" y="0.5" width="4" height="4"/><rect x="0.5" y="7.5" width="4" height="4"/><rect x="0.5" y="14.5" width="4" height="4"/><rect x="8.5" y="7.5" width="4" height="4"/><path d="M2.5 4.5V7.5M2.5 11.5V14.5M4.5 9.5H8.5"/></g><g fill="none" stroke="#d8d8d8" stroke-width="0.8"><path d="M6 1H8.5V18M11 1H13V7M15.5 1H18.5V11"/></g><ellipse cx="18" cy="15" rx="4.8" ry="2.8" fill="#b8b8b8"/><circle cx="18" cy="15" r="1.2" fill="#eee"/><path d="M13 9.5L22.5 19.5" stroke="#444" stroke-width="0.9"/></svg>
<div class="a" style="left:12px;top:233px;width:295px;height:763px;background:#fdfdfd;border-top:1px solid #d6d6d6"></div>
<svg style="left:17px;top:240px" width="13" height="12" viewBox="0 0 13 12"><path d="M0.5 3L3 0.5H12.5V9L10 11.5H0.5Z" fill="#a9e4f8" stroke="#1677a6" stroke-width="1"/><path d="M9.5 3L12.5 0.5V9L9.5 11.5Z" fill="#37abe0"/><path d="M0.5 3H9.5V11.5" fill="none" stroke="#1677a6" stroke-width="0.8"/></svg>
<svg style="left:36px;top:265px" width="15" height="9" viewBox="0 0 15 9"><path d="M4 0.8H14L11 8.2H0.8Z" fill="none" stroke="#7b5e2c" stroke-width="1.3"/></svg>
<svg style="left:36px;top:289px" width="15" height="9" viewBox="0 0 15 9"><path d="M4 0.8H14L11 8.2H0.8Z" fill="none" stroke="#7b5e2c" stroke-width="1.3"/></svg>
<svg style="left:36px;top:313px" width="15" height="9" viewBox="0 0 15 9"><path d="M4 0.8H14L11 8.2H0.8Z" fill="none" stroke="#7b5e2c" stroke-width="1.3"/></svg>
<svg style="left:36px;top:334px" width="17" height="16" viewBox="0 0 17 16"><path d="M1 8H12M5 1.5L10.5 15.5M10 1.5L4.5 15.5" stroke="#806230" stroke-width="1.1" fill="none"/><text x="-0.5" y="5.5" font-size="7" font-weight="700" fill="#222" font-family="Liberation Mono">y</text><text x="-0.5" y="16" font-size="7" font-weight="700" fill="#222" font-family="Liberation Mono">z</text><text x="12" y="11" font-size="7" font-weight="700" fill="#222" font-family="Liberation Mono">x</text></svg>
<svg style="left:36px;top:358px" width="16" height="16" viewBox="0 0 16 16"><rect x="0" y="0" width="16" height="16" fill="#e2e2e2"/><g fill="#c2c2c2"><rect x="2" y="2" width="1" height="1"/><rect x="2" y="6" width="1" height="1"/><rect x="2" y="10" width="1" height="1"/><rect x="2" y="14" width="1" height="1"/><rect x="6" y="2" width="1" height="1"/><rect x="6" y="6" width="1" height="1"/><rect x="6" y="10" width="1" height="1"/><rect x="6" y="14" width="1" height="1"/><rect x="10" y="2" width="1" height="1"/><rect x="10" y="6" width="1" height="1"/><rect x="10" y="10" width="1" height="1"/><rect x="10" y="14" width="1" height="1"/><rect x="14" y="2" width="1" height="1"/><rect x="14" y="6" width="1" height="1"/><rect x="14" y="10" width="1" height="1"/><rect x="14" y="14" width="1" height="1"/></g><path d="M1.5 11C4 2 11 2 14.5 11" fill="none" stroke="#c8c2a8" stroke-width="1.5"/></svg>
<svg style="left:22px;top:386px" width="8" height="9" viewBox="0 0 8 9"><path d="M0 0L7.5 4.5L0 9Z" fill="#8a8a8a"/></svg>
<svg style="left:36px;top:382px" width="16" height="16" viewBox="0 0 16 16"><path d="M0.5 6L6 0.5H15.5V10L10 15.5Z" fill="#8fc8e2"/><path d="M0.5 6L6 0.5H15.5L10 6Z" fill="#c4e7f6"/><path d="M10 6L15.5 0.5V10L10 15.5Z" fill="#75b4d4"/><path d="M10 10L15.5 10L10 15.5Z" fill="#d3eef8"/><rect x="0.5" y="6" width="9.5" height="9.5" fill="#f3f3f3" stroke="#999"/><path d="M6 0.5H15.5V10L10 15.5M10 6L15.5 0.5" fill="none" stroke="#8fb9cf" stroke-width="0.8"/></svg>
<svg style="left:39px;top:408px" width="11" height="12" viewBox="0 0 11 12"><path d="M0.5 4H5V0.5L10.5 6L5 11.5V8H0.5Z" fill="#109a10" stroke="#0a5a0a" stroke-width="0.6"/><path d="M0.5 6H10.5L5 11.5V8H0.5Z" fill="#1e4f1e" opacity="0.6"/></svg>
<div class="t" style="left:37px;top:240.1px;font-size:11.5px;color:#262626;font-weight:400;">PRT0001.PRT</div>
<div class="t" style="left:57px;top:264.1px;font-size:11.5px;color:#262626;font-weight:400;">RIGHT</div>
<div class="t" style="left:57px;top:288.1px;font-size:11.5px;color:#262626;font-weight:400;">TOP</div>
<div class="t" style="left:57px;top:312.1px;font-size:11.5px;color:#262626;font-weight:400;">FRONT</div>
<div class="t" style="left:57px;top:336.1px;font-size:11.5px;color:#262626;font-weight:400;letter-spacing:-0.5px">PRT_CSYS_DEF</div>
<div class="t" style="left:57px;top:359.9px;font-size:12px;color:#b0b0b0;font-weight:400;">草绘 1</div>
<div class="t" style="left:57px;top:383.9px;font-size:12px;color:#262626;font-weight:400;">拉伸 1</div>
<div class="t" style="left:57px;top:407.9px;font-size:12px;color:#262626;font-weight:400;">在此插入</div>
<div class="a" style="left:315px;top:175px;width:1508px;height:826px;background:#e8e9ec;"></div>
<div class="a" style="left:921px;top:182px;width:297px;height:32px;background:#f7f7f7;border:1.5px solid #a2a2a2"></div>
<svg style="left:929px;top:189px" width="16" height="16" viewBox="0 0 16 16"><rect x="0.5" y="0.5" width="14" height="14" fill="#f2f2f2" stroke="#aaa"/><circle cx="7.5" cy="7.5" r="5" fill="#eaf7fc" stroke="#2b8ab8" stroke-width="1.2"/><path d="M11 11L15 15.5" stroke="#999" stroke-width="2.4" stroke-linecap="round"/><path d="M11 11L15 15.5" stroke="#eee" stroke-width="0.9"/></svg>
<svg style="left:955px;top:189px" width="16" height="16" viewBox="0 0 16 16"><circle cx="6" cy="6" r="5.6" fill="#eaf7fc" stroke="#2b8ab8" stroke-width="1.2"/><path d="M10 10L15 15.5" stroke="#999" stroke-width="2.6" stroke-linecap="round"/><path d="M10 10L15 15.5" stroke="#eee" stroke-width="1"/><path d="M3 6H9" stroke="#0b5f8a" stroke-width="2"/><path d="M6 3V9" stroke="#0b5f8a" stroke-width="2"/></svg>
<svg style="left:955px;top:189px" width="16" height="16" viewBox="0 0 16 16"><circle cx="32" cy="6" r="5.6" fill="#eaf7fc" stroke="#2b8ab8" stroke-width="1.2"/><path d="M36 10L41 15.5" stroke="#999" stroke-width="2.6" stroke-linecap="round"/><path d="M36 10L41 15.5" stroke="#eee" stroke-width="1"/><path d="M29 6H35" stroke="#0b5f8a" stroke-width="2"/></svg>
<svg style="left:1007px;top:189px" width="16" height="16" viewBox="0 0 16 16"><rect x="0.5" y="0.5" width="15" height="15" fill="#7fc0dc" stroke="#999"/><path d="M1 1H15V3C10 1 5 2 1 8Z" fill="#d8f0fa"/><path d="M1 8C5 2 10 1 15 3V6L4 15H1Z" fill="#fff"/><path d="M3 15L14 4" stroke="#1d6d96" stroke-width="1.5"/></svg>
<svg style="left:1033px;top:189px" width="16" height="16" viewBox="0 0 16 16"><defs><radialGradient id="sph" cx="0.35" cy="0.35" r="0.75"><stop offset="0" stop-color="#fff"/><stop offset="0.6" stop-color="#d0d0d0"/><stop offset="1" stop-color="#8a8a8a"/></radialGradient><linearGradient id="cub" x1="0" y1="0" x2="1" y2="1"><stop offset="0" stop-color="#fafafa"/><stop offset="1" stop-color="#bcbcbc"/></linearGradient></defs><path d="M6 4L9.5 0.5H16V9L12.5 12.5H6Z" fill="url(#cub)"/><path d="M12.5 4L16 0.5V9L12.5 12.5Z" fill="#a9a9a9"/><path d="M6 4L9.5 0.5H16L12.5 4Z" fill="#f4f4f4"/><circle cx="6" cy="10" r="5.8" fill="url(#sph)"/></svg>
<svg style="left:1047px;top:203px" width="4" height="4" viewBox="0 0 4 4"><path d="M4 0V4H0Z" fill="#333"/></svg>
<svg style="left:1060px;top:189px" width="16" height="16" viewBox="0 0 16 16"><path d="M0.5 4L4 0.5H15.5V12L12 15.5H0.5Z" fill="#b9e1f3"/><path d="M12 4L15.5 0.5V12L12 15.5Z" fill="#7cbcdb"/><rect x="0.5" y="4" width="11.5" height="11.5" fill="#fff" stroke="#7cc3e4" stroke-width="1"/></svg>
<svg style="left:1074px;top:203px" width="4" height="4" viewBox="0 0 4 4"><path d="M4 0V4H0Z" fill="#333"/></svg>
<svg style="left:1087px;top:189px" width="16" height="16" viewBox="0 0 16 16"><path d="M0.5 4L4 0.5H15.5V12L12 15.5H0.5Z" fill="#b9e1f3"/><path d="M12 4L15.5 0.5V12L12 15.5Z" fill="#7cbcdb"/><rect x="0.5" y="4" width="11.5" height="11.5" fill="#fff" stroke="#7cc3e4" stroke-width="1"/><rect x="8.5" y="7.5" width="7" height="8.5" fill="#f6f6f6" stroke="#8a8a8a" stroke-width="0.8"/><path d="M10 10H14M10 12H14M10 14H14" stroke="#666" stroke-width="0.5"/></svg>
<svg style="left:1101px;top:203px" width="4" height="4" viewBox="0 0 4 4"><path d="M4 0V4H0Z" fill="#333"/></svg>
<svg style="left:1114px;top:189px" width="17" height="16" viewBox="0 0 17 16"><rect x="0.5" y="0.5" width="13" height="14" fill="#fff" stroke="#999"/><path d="M0.5 4H13.5M0.5 7.5H13.5M0.5 11H13.5M4 0.5V15" stroke="#aaa" stroke-width="0.8"/><rect x="5" y="8.5" width="11.5" height="7.5" rx="1" fill="#444"/><rect x="8" y="7" width="4" height="2" fill="#444"/><circle cx="10.8" cy="12.2" r="2.6" fill="#888" stroke="#eee" stroke-width="0.8"/></svg>
<svg style="left:1140px;top:189px" width="16" height="16" viewBox="0 0 16 16"><g stroke="#7b5e2c" stroke-width="1.3"><path d="M1 0.5L5 4.5M5 0.5L1 4.5"/><path d="M9.5 0.5L8.5 3M6.5 8L5.5 10.5M4 13.5L3 16"/><path d="M8 11H16M9.5 6L14.5 16M14 6L9.5 16"/></g></svg>
<svg style="left:1154px;top:203px" width="4" height="4" viewBox="0 0 4 4"><path d="M4 0V4H0Z" fill="#333"/></svg>
<div class="a" style="left:1164px;top:186px;width:23px;height:23px;background:#dedede;border:1px solid #a9a9a9"></div>
<svg style="left:1168px;top:189px" width="16" height="16" viewBox="0 0 16 16"><rect x="-0.3" y="0.6" width="8.5" height="6" fill="#fff6e0" stroke="#9a9a9a" stroke-width="1"/><path d="M8.2 3.5H15" stroke="#333" stroke-width="1"/><path d="M14.5 3.8L11.5 9.5" stroke="#333" stroke-width="1.3"/><path d="M10.5 10.8L11 6.5L15.3 8.7Z" fill="#333"/><path d="M6 13.5C8 10.6 13 10.6 15 13.5C13 16.4 8 16.4 6 13.5Z" fill="#3a3f44"/><circle cx="10.5" cy="13.5" r="1.6" fill="#fff"/><circle cx="10.5" cy="13.5" r="0.6" fill="#333"/></svg>
<div class="a" style="left:1190px;top:186px;width:23px;height:23px;background:#dedede;border:1px solid #a9a9a9"></div>
<svg style="left:1194px;top:189px" width="16" height="16" viewBox="0 0 16 16"><path d="M3 3L7 8.5L14 8.5M7 8.5L3 14" stroke="#333" stroke-width="1" fill="none"/><circle cx="3" cy="3" r="2.5" fill="#5fae5f"/><circle cx="14" cy="8.5" r="2.5" fill="#e26a6a"/><circle cx="3" cy="14" r="2.5" fill="#3e8fc0"/></svg>
<svg style="left:0;top:0" width="1827" height="1040" viewBox="0 0 1827 1040"><path d="M707.5 299.5L1351 311.8L1333.2 836.7L690.8 826.3Z" fill="#d8e4f3"/><path d="M1351 311.8L1392.7 336.8L1376 862.7L729 851L690.8 826.3L1333.2 836.7Z" fill="#565d67"/><path d="M1354 312.5L1395 337.5" stroke="#f4f6f8" stroke-width="1.2"/><g fill="none" stroke="#8d949c" stroke-width="1" shape-rendering="crispEdges"><path d="M707.5 295.2L689.5 829L730.4 855"/><path d="M707.5 295.2L752.2 321.2"/><path d="M750.4 321L734.8 855"/></g><g fill="none" stroke="#7a4a4c" stroke-width="1" shape-rendering="crispEdges"><path d="M703.2 299.4L1355.7 311.4L1397.5 337"/><path d="M703.2 299.4L746.4 324.5"/><path d="M746 321.3L1397.5 332.3"/><path d="M717 325.5L1399 337.5"/><path d="M746.7 326L730.2 855.5L1379.8 867.5L1397.5 332.3"/><path d="M1388 332.5V337.3"/></g><path d="M750.8 326V359.5" stroke="#7a4a4c" stroke-width="1.6"/><path d="M748 346L753.5 346L751 356Z" fill="#7a4a4c"/><path d="M719 325.5L731 323.2V327.8Z" fill="#7a4a4c"/><path d="M746 326L755 326L751 330Z" fill="#7a4a4c"/><path transform="translate(755.00,328) scale(0.917,0.973)" d="M0 11V0H4Q6 0 6 2.5V3.5Q6 6 4 6H0" fill="none" stroke="#7a4a4c" stroke-width="0.95" vector-effect="non-scaling-stroke"/><path transform="translate(763.84,328) scale(0.917,0.973)" d="M0 11V0H4Q6 0 6 2.5V3.5Q6 6 4 6H0M3.5 6L6 11" fill="none" stroke="#7a4a4c" stroke-width="0.95" vector-effect="non-scaling-stroke"/><path transform="translate(772.68,328) scale(0.917,0.973)" d="M0 0H6M3 0V11" fill="none" stroke="#7a4a4c" stroke-width="0.95" vector-effect="non-scaling-stroke"/><path transform="translate(781.52,328) scale(0.917,0.973)" d="M0 10.8H5.5" fill="none" stroke="#7a4a4c" stroke-width="0.95" vector-effect="non-scaling-stroke"/><path transform="translate(790.36,328) scale(0.917,0.973)" d="M6 1.8Q5.5 0 3 0Q0 0 0 3V8Q0 11 3 11Q5.5 11 6 9.2" fill="none" stroke="#7a4a4c" stroke-width="0.95" vector-effect="non-scaling-stroke"/><path transform="translate(799.20,328) scale(0.917,0.973)" d="M6 1.8Q5.5 0 3 0Q0 0 0 2.8Q0 5 3 5.5Q6 6 6 8.3Q6 11 3 11Q0.5 11 0 9.2" fill="none" stroke="#7a4a4c" stroke-width="0.95" vector-effect="non-scaling-stroke"/><path transform="translate(808.04,328) scale(0.917,0.973)" d="M0 0L3 5.5L6 0M3 5.5V11" fill="none" stroke="#7a4a4c" stroke-width="0.95" vector-effect="non-scaling-stroke"/><path transform="translate(816.88,328) scale(0.917,0.973)" d="M6 1.8Q5.5 0 3 0Q0 0 0 2.8Q0 5 3 5.5Q6 6 6 8.3Q6 11 3 11Q0.5 11 0 9.2" fill="none" stroke="#7a4a4c" stroke-width="0.95" vector-effect="non-scaling-stroke"/><path transform="translate(825.72,328) scale(0.917,0.973)" d="M0 10.8H5.5" fill="none" stroke="#7a4a4c" stroke-width="0.95" vector-effect="non-scaling-stroke"/><path transform="translate(834.56,328) scale(0.917,0.973)" d="M0 0V11H2.5Q6 11 6 8V3Q6 0 2.5 0Z" fill="none" stroke="#7a4a4c" stroke-width="0.95" vector-effect="non-scaling-stroke"/><path transform="translate(843.40,328) scale(0.917,0.973)" d="M6 0H0V11H6M0 5.5H5" fill="none" stroke="#7a4a4c" stroke-width="0.95" vector-effect="non-scaling-stroke"/><path transform="translate(852.24,328) scale(0.917,0.973)" d="M6 0H0V11M0 5.5H5" fill="none" stroke="#7a4a4c" stroke-width="0.95" vector-effect="non-scaling-stroke"/><path transform="translate(708.00,311) scale(0.833,0.964)" d="M0 0L3 5.5L6 0M3 5.5V11" fill="none" stroke="#111" stroke-width="1.05" vector-effect="non-scaling-stroke"/><path transform="translate(736.00,308.5) scale(0.833,1.000)" d="M0 0L6 11M6 0L0 11" fill="none" stroke="#111" stroke-width="1.05" vector-effect="non-scaling-stroke"/><path transform="translate(741.00,362.5) scale(0.750,1.000)" d="M0 0H6L0 11H6" fill="none" stroke="#111" stroke-width="1.05" vector-effect="non-scaling-stroke"/><path d="M1018 581.5H1042" stroke="#2fe02f" stroke-width="1.8"/><path d="M1041.5 582V606" stroke="#36f0f0" stroke-width="1.6"/><circle cx="1017.9" cy="581" r="2.2" fill="#2fe02f"/><circle cx="1037.9" cy="578.8" r="2.9" fill="#f42a2a"/><circle cx="1041.2" cy="605.9" r="2.6" fill="#38f2f2"/><path d="M1039 581.5H1043" stroke="#f42a2a" stroke-width="1.2"/></svg>
<div class="a" style="left:4px;top:1001px;width:1819px;height:2px;background:#a8a8a8;"></div>
<div class="a" style="left:4px;top:1003px;width:1819px;height:33px;background:#eef0f2;"></div>
<div class="a" style="left:10px;top:1010px;width:22px;height:22px;background:#e0e1e3;border:1px solid #b5b5b5"></div>
<svg style="left:18px;top:1013px" width="11" height="16" viewBox="0 0 11 16"><g fill="#fff" stroke="#333" stroke-width="0.9"><rect x="0.5" y="0.5" width="3" height="3"/><rect x="0.5" y="6.5" width="3" height="3"/><rect x="0.5" y="12.5" width="3" height="3"/><rect x="7.5" y="6.5" width="3" height="3"/></g><path d="M2 3.5V6.5M2 9.5V12.5M3.5 8H7.5" stroke="#333" stroke-width="0.9"/></svg>
<svg style="left:39px;top:1013px" width="16" height="16" viewBox="0 0 16 16"><circle cx="8" cy="8" r="6.5" fill="#3a9ad6"/><circle cx="6" cy="6" r="3" fill="#9fd4f2"/><path d="M1 13C4 12 12 5 15 2" stroke="#333" stroke-width="1" fill="none"/><path d="M2 14C0 15 0 13 3 10M14 3C16 1 15 0 12 2" stroke="#333" stroke-width="1.2" fill="none"/></svg>
<svg style="left:65px;top:1013px" width="16" height="16" viewBox="0 0 16 16"><rect x="0.5" y="0.5" width="15" height="15" rx="1" fill="#e4f0f6" stroke="#2f7fa6" stroke-width="1"/></svg>
<div class="a" style="left:93px;top:1010px;width:1px;height:22px;background:#b0b0b0;"></div>
<div class="a" style="left:1442px;top:1006px;width:1px;height:26px;background:#c0c0c0;"></div>
<div class="a" style="left:1483px;top:1006px;width:1px;height:26px;background:#c0c0c0;"></div>
<div class="a" style="left:1530px;top:1006px;width:1px;height:26px;background:#c0c0c0;"></div>
<div class="a" style="left:1486px;top:1007px;width:42px;height:24px;background:#fff;border:1px solid #c8c8c8"></div>
<div class="a" style="left:1513px;top:1007px;width:1px;height:24px;background:#d0d0d0;"></div>
<svg style="left:1492px;top:1011px" width="16" height="16" viewBox="0 0 16 16"><path d="M1 6L3 1H6V6ZM10 6V1H13L15 6Z" fill="#333"/><rect x="0.5" y="5" width="6.5" height="10" rx="1" fill="#444"/><rect x="9" y="5" width="6.5" height="10" rx="1" fill="#444"/><rect x="6" y="6" width="4" height="4" fill="#333"/><rect x="1.5" y="6" width="2" height="7" fill="#999"/><rect x="10" y="6" width="2" height="7" fill="#999"/></svg>
<div class="arr" style="left:1516.5px;top:1017.0px;border-left-width:4.0px;border-right-width:4.0px;border-top:4px solid #555"></div>
<div class="a" style="left:1628px;top:1007px;width:177px;height:24px;background:#f0f1f3;border:1px solid #c8c8c8"></div>
<div class="a" style="left:1790px;top:1007px;width:1px;height:24px;background:#c8c8c8;"></div>
<div class="t" style="left:1637px;top:1013.4px;font-size:12px;color:#2a6fb0;font-weight:400;">智能</div>
<svg style="left:1796px;top:1016px" width="6" height="6" viewBox="0 0 6 6"><path d="M0 0L6 3L0 6Z" fill="#555"/></svg>
<svg style="left:1802px;top:1024px" width="12" height="12" viewBox="0 0 12 12"><path d="M11 2L2 11M11 6L6 11M11 10L10 11" stroke="#aaa" stroke-width="1"/></svg>
<div class="t" style="left:1540px;top:1010.6px;font-size:20px;color:rgba(110,110,110,0.7);font-weight:400;"><span style="font-size:19px;letter-spacing:-0.9px">CSDN @</span>阿里陆磊咯啥西斯谁搜</div>
</body></html>
